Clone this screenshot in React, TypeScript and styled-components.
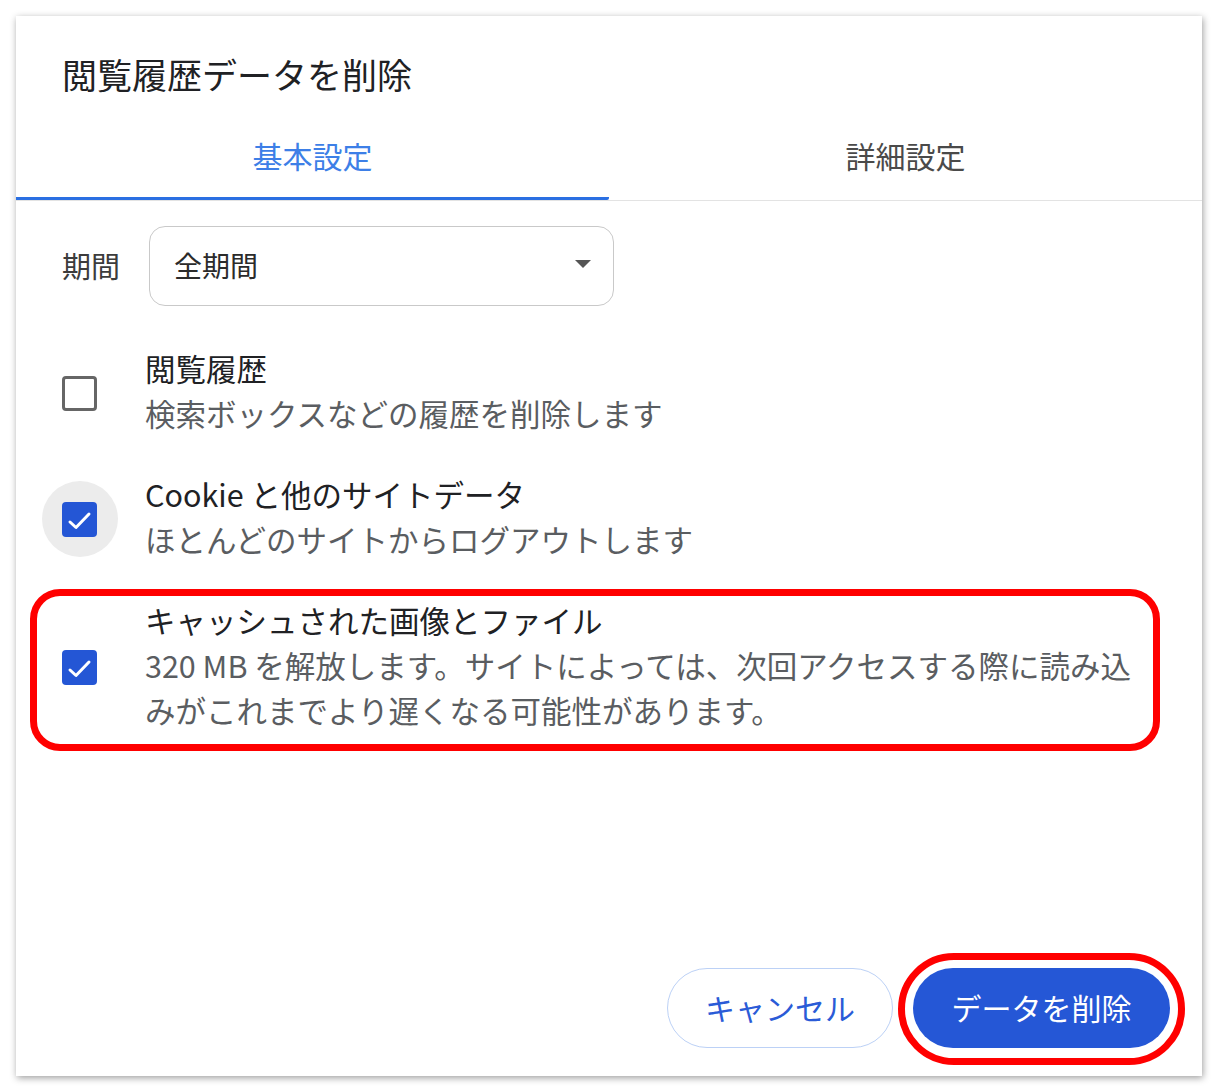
import * as React from "react";
import styled, { createGlobalStyle } from "styled-components";

const GlobalStyle = createGlobalStyle`
    html, body {
        margin: 0;
        padding: 0;
        background: #ffffff;
    }
    body {
        font-family: "Noto Sans CJK JP", "Noto Sans", sans-serif;
        color: #202124;
    }
`;

const Page = styled.div`
    padding: 16px;
`;

const Dialog = styled.div`
    width: 1186px;
    height: 1060px;
    box-sizing: border-box;
    background: #ffffff;
    box-shadow: 1px 2px 7px rgba(0, 0, 0, 0.38);
    display: flex;
    flex-direction: column;
    padding-top: 38px;
`;

const Title = styled.h1`
    margin: 0 0 2px;
    padding-left: 46px;
    font-size: 35px;
    line-height: 40px;
    font-weight: 400;
    color: #202124;
`;

const TabBar = styled.div`
    display: flex;
    border-bottom: 1px solid #e3e3e3;
`;

const Tab = styled.div<{ $active?: boolean }>`
    flex: 1;
    text-align: center;
    padding: 39px 0 22px;
    font-size: 30px;
    line-height: 40px;
    color: ${(p) => (p.$active ? "#3d7fe7" : "#4a4a4a")};
    border-bottom: 3px solid ${(p) => (p.$active ? "#2a6fe2" : "transparent")};
    border-bottom-right-radius: 2px;
`;

const Body = styled.div`
    padding-left: 46px;
    display: flex;
    flex-direction: column;
`;

const PeriodRow = styled.div`
    display: flex;
    align-items: center;
    gap: 29px;
    margin-top: 25px;
`;

const PeriodLabel = styled.span`
    font-size: 29px;
    line-height: 40px;
    margin-top: -2px;
    color: #3c3c3c;
`;

const Select = styled.div`
    width: 465px;
    height: 80px;
    box-sizing: border-box;
    border: 1.5px solid #c9c9c9;
    border-radius: 16px;
    display: flex;
    align-items: center;
    justify-content: space-between;
    padding: 0 22px 2px 24px;
    font-size: 28px;
    color: #2b2b2b;
`;

const Caret = styled.span`
    width: 0;
    height: 0;
    border-left: 8px solid transparent;
    border-right: 8px solid transparent;
    border-top: 8px solid #555;
    margin-top: -2px;
`;

const Options = styled.div`
    display: flex;
    flex-direction: column;
    gap: 9px;
    margin-top: 31px;
    margin-left: -32px;
    width: 1130px;
`;

const OptionRow = styled.div<{ $marked?: boolean }>`
    display: flex;
    align-items: center;
    gap: 48px;
    border: 7px solid ${(p) => (p.$marked ? "#ff0000" : "transparent")};
    border-radius: 30px;
    padding: 2px 5px 11px 25px;
`;

const BoxCell = styled.div`
    position: relative;
    width: 35px;
    height: 35px;
    flex-shrink: 0;
    margin-top: 4px;
`;

const Halo = styled.span`
    position: absolute;
    left: 50%;
    top: 50%;
    width: 76px;
    height: 76px;
    margin: -38px 0 0 -38px;
    border-radius: 50%;
    background: #ececec;
`;

const Box = styled.div<{ $checked?: boolean }>`
    position: relative;
    width: 35px;
    height: 35px;
    box-sizing: border-box;
    border-radius: 4px;
    border: ${(p) => (p.$checked ? "none" : "3.5px solid #666")};
    background: ${(p) => (p.$checked ? "#2456d5" : "#fff")};
    display: flex;
    align-items: center;
    justify-content: center;
`;

const OptionText = styled.div`
    flex: 1;
    font-size: 30.5px;
    line-height: 45px;
`;

const OptionTitle = styled.div`
    color: #202124;
`;

const OptionDesc = styled.div`
    color: #5a5d61;
`;

const Footer = styled.div`
    margin-top: auto;
    display: flex;
    justify-content: flex-end;
    gap: 20px;
    padding: 0 32px 28px 0;
`;

const Button = styled.button<{ $primary?: boolean }>`
    height: 80px;
    box-sizing: border-box;
    border-radius: 40px;
    font-family: "Noto Sans CJK JP", "Noto Sans", sans-serif;
    font-size: 30px;
    padding: 0 0 3px;
    width: ${(p) => (p.$primary ? "257px" : "226px")};
    border: ${(p) => (p.$primary ? "none" : "1.5px solid #bcd1f6")};
    background: ${(p) => (p.$primary ? "#2557d6" : "#ffffff")};
    color: ${(p) => (p.$primary ? "#ffffff" : "#2a5bd7")};
`;

const Marked = styled.div`
    position: relative;
`;

const Ring = styled.span`
    position: absolute;
    left: -15px;
    right: -15px;
    top: -15px;
    bottom: -17px;
    border: 7px solid #ff0000;
    border-radius: 999px;
    pointer-events: none;
`;

const Check = () => (
    <svg width="35" height="35" viewBox="0 0 35 35">
        <polyline
            points="8,20 14,25.5 27,12"
            fill="none"
            stroke="#ffffff"
            strokeWidth="3"
            strokeLinecap="round"
            strokeLinejoin="round"
        />
    </svg>
);

type Option = {
    title: string;
    desc: string;
    checked: boolean;
    focused?: boolean;
    marked?: boolean;
};

const options: Option[] = [
    { title: "閲覧履歴", desc: "検索ボックスなどの履歴を削除します", checked: false },
    {
        title: "Cookie と他のサイトデータ",
        desc: "ほとんどのサイトからログアウトします",
        checked: true,
        focused: true
    },
    {
        title: "キャッシュされた画像とファイル",
        desc: "320 MB を解放します。サイトによっては、次回アクセスする際に読み込みがこれまでより遅くなる可能性があります。",
        checked: true,
        marked: true
    }
];

export default function App() {
    const [tab, setTab] = React.useState(0);

    return (
        <Page>
            <GlobalStyle />
            <Dialog>
                <Title>閲覧履歴データを削除</Title>
                <TabBar>
                    <Tab $active={tab === 0} onClick={() => setTab(0)}>
                        基本設定
                    </Tab>
                    <Tab $active={tab === 1} onClick={() => setTab(1)}>
                        詳細設定
                    </Tab>
                </TabBar>
                <Body>
                    <PeriodRow>
                        <PeriodLabel>期間</PeriodLabel>
                        <Select>
                            <span>全期間</span>
                            <Caret />
                        </Select>
                    </PeriodRow>
                    <Options>
                        {options.map((o) => (
                            <OptionRow key={o.title} $marked={o.marked}>
                                <BoxCell>
                                    {o.focused && <Halo />}
                                    <Box $checked={o.checked}>{o.checked && <Check />}</Box>
                                </BoxCell>
                                <OptionText>
                                    <OptionTitle>{o.title}</OptionTitle>
                                    <OptionDesc>{o.desc}</OptionDesc>
                                </OptionText>
                            </OptionRow>
                        ))}
                    </Options>
                </Body>
                <Footer>
                    <Button>キャンセル</Button>
                    <Marked>
                        <Button $primary>データを削除</Button>
                        <Ring />
                    </Marked>
                </Footer>
            </Dialog>
        </Page>
    );
}
